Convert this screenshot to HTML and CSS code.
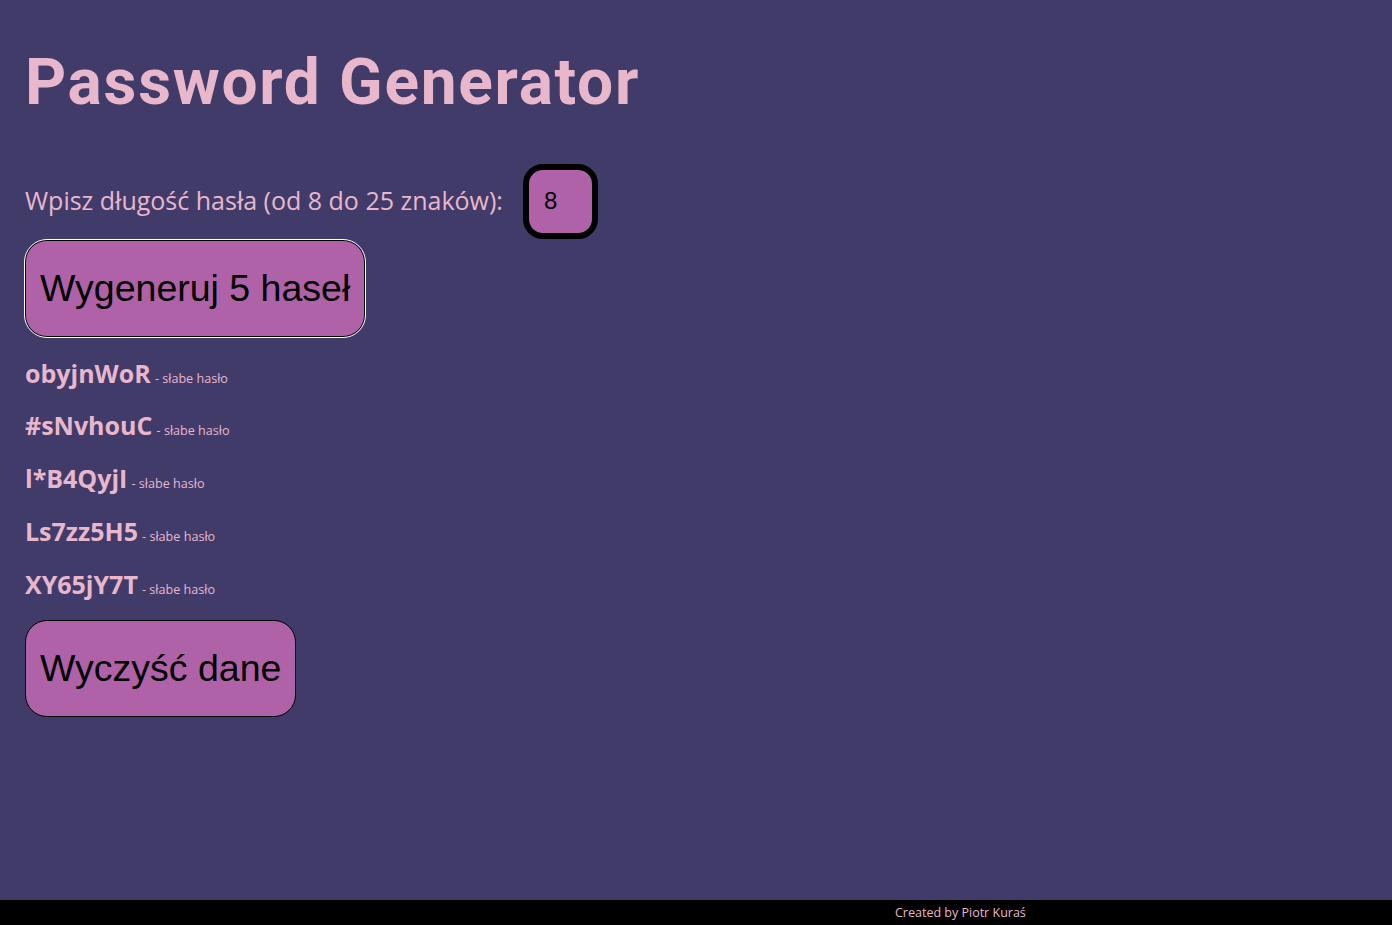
FILE: index.html
```html
<!DOCTYPE html>
<html lang="pl">
<head>
<meta charset="utf-8">
<title>Password Generator</title>
<link rel="stylesheet" href="styles.css">
</head>
<body>
<main class="app">
  <h1 class="title">Password Generator</h1>
  <div class="length-row">
    <label class="length-label" for="len">Wpisz długość hasła (od 8 do 25 znaków):</label>
    <input class="length-input" id="len" type="text" value="8">
  </div>
  <button class="btn btn-focus">Wygeneruj 5 haseł</button>
  <ul class="results">
    <li class="result"><span class="pass">obyjnWoR</span> <span class="strength">- słabe hasło</span></li>
    <li class="result"><span class="pass">#sNvhouC</span> <span class="strength">- słabe hasło</span></li>
    <li class="result"><span class="pass">l*B4QyjI</span> <span class="strength">- słabe hasło</span></li>
    <li class="result"><span class="pass">Ls7zz5H5</span> <span class="strength">- słabe hasło</span></li>
    <li class="result"><span class="pass">XY65jY7T</span> <span class="strength">- słabe hasło</span></li>
  </ul>
  <button class="btn">Wyczyść dane</button>
</main>
<footer class="footer">Created by Piotr Kuraś</footer>
</body>
</html>
```
FILE: styles.css
```css
html, body {
  margin: 0;
  padding: 0;
  height: 100%;
}
body {
  background: #413b6a;
  color: #e8b7cb;
  font-family: "Open Sans", sans-serif;
  display: flex;
  flex-direction: column;
}
.app {
  flex: 1;
  padding: 45px 25px 0;
  display: flex;
  flex-direction: column;
  align-items: flex-start;
}
.title {
  font-family: Roboto, sans-serif;
  font-weight: 700;
  font-size: 64px;
  letter-spacing: 1.7px;
  margin: 0 0 42px;
  line-height: 1.2;
}
.length-row {
  display: flex;
  align-items: center;
  gap: 20px;
}
.length-label {
  font-size: 25px;
  position: relative;
  top: -1px;
}
.length-input {
  width: 75px;
  height: 75px;
  box-sizing: border-box;
  border: 6px solid #000;
  border-radius: 20px;
  background: #af62a8;
  font-family: "Liberation Sans", Arial, sans-serif;
  font-size: 24px;
  padding: 0 0 0 15px;
  color: #000;
}
.btn {
  background: #af62a8;
  border: 1.5px solid #000;
  border-radius: 22px;
  font-family: "Liberation Sans", Arial, sans-serif;
  font-size: 37.5px;
  color: #000;
  padding: 0 14px;
  height: 97px;
}
.btn-focus {
  outline: 1px solid #fff;
  margin-top: 1px;
}
.results {
  list-style: none;
  padding: 0;
  margin: 19px 0 19px;
  display: flex;
  flex-direction: column;
  gap: 18.7px;
}
.result {
  line-height: 34px;
  height: 34px;
}
.pass {
  font-weight: 700;
  font-size: 25px;
}
.strength {
  font-size: 12.6px;
  line-height: 1;
}
.footer {
  background: #000;
  color: #e8b7cb;
  font-size: 12.5px;
  height: 25px;
  line-height: 26px;
  padding-left: 895px;
}
```
